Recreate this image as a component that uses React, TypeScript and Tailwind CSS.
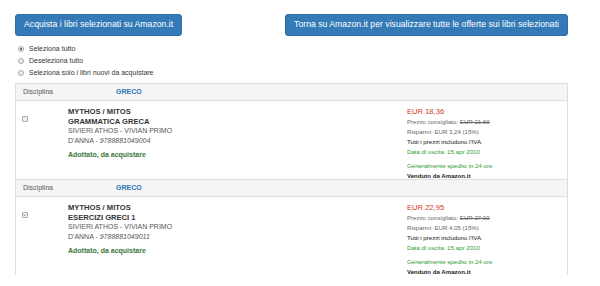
import { Check } from "lucide-react";

type Book = {
  serie: string;
  titolo: string;
  autori: string;
  editore: string;
  isbn: string;
  prezzo: string;
  listino: string;
  risparmio: string;
  checked: boolean;
};

const books: Book[] = [
  {
    serie: "MYTHOS / MITOS",
    titolo: "GRAMMATICA GRECA",
    autori: "SIVIERI ATHOS - VIVIAN PRIMO",
    editore: "D'ANNA",
    isbn: "9788881049004",
    prezzo: "EUR 18,36",
    listino: "EUR 21,60",
    risparmio: "EUR 3,24 (15%)",
    checked: false,
  },
  {
    serie: "MYTHOS / MITOS",
    titolo: "ESERCIZI GRECI 1",
    autori: "SIVIERI ATHOS - VIVIAN PRIMO",
    editore: "D'ANNA",
    isbn: "9788881049011",
    prezzo: "EUR 22,95",
    listino: "EUR 27,00",
    risparmio: "EUR 4,05 (15%)",
    checked: true,
  },
];

const opzioni = [
  "Seleziona tutto",
  "Deseleziona tutto",
  "Seleziona solo i libri nuovi da acquistare",
];

function Radio({ on }: { on: boolean }) {
  return (
    <span className="w-[6px] h-[6px] rounded-full border border-[#a9a9a9] bg-[#eee] flex items-center justify-center">
      {on && <span className="w-[2px] h-[2px] rounded-full bg-[#444]" />}
    </span>
  );
}

function BookRow({ book }: { book: Book }) {
  return (
    <div className="border-t border-[#ddd]">
      {/* intestazione disciplina */}
      <div className="grid grid-cols-[93px_1fr] h-[17px] items-center bg-[#f5f5f5] border-b border-[#ddd] pl-[7px] text-[7px]">
        <span className="text-[#555]">Disciplina</span>
        <span className="text-[#2f74b5] font-bold">GRECO</span>
      </div>
      {/* dati libro */}
      <div className="grid grid-cols-[52px_339px_1fr] h-[78px] pt-[6px]">
        <div className="pl-[6px] pt-[9px]">
          <span
            className={
              "w-[6px] h-[6px] border border-[#aaa] rounded-[1px] flex items-center justify-center " +
              (book.checked ? "bg-white" : "bg-[#eee]")
            }
          >
            {book.checked && <Check size={6} strokeWidth={4} className="text-[#333]" />}
          </span>
        </div>
        <div className="text-[7px] leading-[9.7px] text-[#333]">
          <div className="font-bold text-[7.6px]">{book.serie}</div>
          <div className="font-bold text-[7.6px]">{book.titolo}</div>
          <div className="text-[#555]">{book.autori}</div>
          <div className="text-[#555]">
            {book.editore} - <span className="italic">{book.isbn}</span>
          </div>
          <div className="mt-[4px] font-bold text-[#3c763d]">Adottato, da acquistare</div>
        </div>
        <div className="text-[6.1px] leading-[10px] text-[#666]">
          <div className="text-[7.6px] text-[#cc3a1e]">{book.prezzo}</div>
          <div>
            Prezzo consigliato: <span className="line-through">{book.listino}</span>
          </div>
          <div>Risparmi: {book.risparmio}</div>
          <div className="text-[#111]">Tutti i prezzi includono l'IVA.</div>
          <div className="text-[#2e9a2e]">Data di uscita: 15 apr 2010</div>
          <div className="mt-[4px] text-[#2e9a2e]">Generalmente spedito in 24 ore</div>
          <div className="font-bold text-[#222]">Venduto da Amazon.it</div>
        </div>
      </div>
    </div>
  );
}

export default function App() {
  return (
    <div
      className="w-[600px] h-[286px] overflow-hidden bg-white pl-[15px] pr-[32px] pt-[14px]"
      style={{ fontFamily: '"Liberation Sans", Arial, sans-serif' }}
    >
      {/* PULSANTI */}
      <div className="flex justify-between">
        <button className="h-[22px] px-[8px] rounded-[3px] bg-[#337ab7] border border-[#2e6da4] text-white text-[8.7px]">
          Acquista i libri selezionati su Amazon.it
        </button>
        <button className="h-[22px] px-[8px] rounded-[3px] bg-[#337ab7] border border-[#2e6da4] text-white text-[8.7px]">
          Torna su Amazon.it per visualizzare tutte le offerte sui libri selezionati
        </button>
      </div>

      {/* OPZIONI */}
      <div className="mt-[7px] pl-[3px] flex flex-col">
        {opzioni.map((o, i) => (
          <div key={o} className="flex items-center gap-[5px] h-[12px] text-[7px] text-[#333]">
            <Radio on={i === 0} />
            {o}
          </div>
        ))}
      </div>

      {/* TABELLA */}
      <div className="mt-[4px] border-l border-r border-[#ddd]">
        {books.map((b) => (
          <BookRow key={b.isbn} book={b} />
        ))}
      </div>
    </div>
  );
}
